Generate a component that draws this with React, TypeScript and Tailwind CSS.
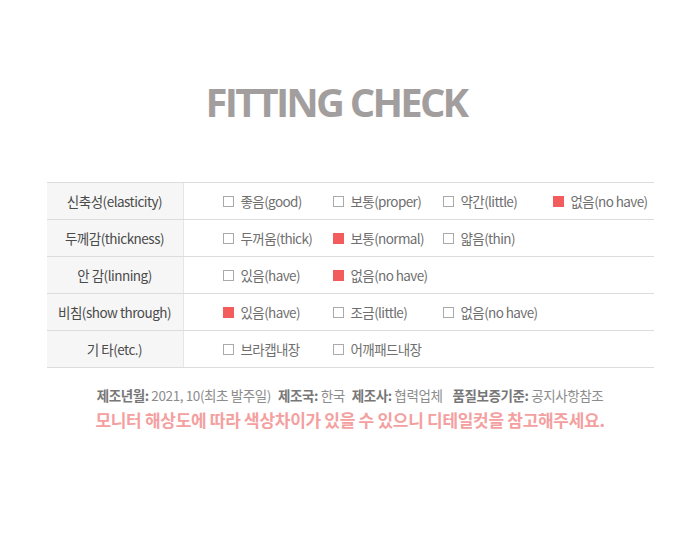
const rows: { label: string; items: { text: string; on?: boolean }[] }[] = [
  {
    label: '신축성(elasticity)',
    items: [
      { text: '좋음(good)' },
      { text: '보통(proper)' },
      { text: '약간(little)' },
      { text: '없음(no have)', on: true },
    ],
  },
  {
    label: '두께감(thickness)',
    items: [{ text: '두꺼움(thick)' }, { text: '보통(normal)', on: true }, { text: '얇음(thin)' }],
  },
  {
    label: '안 감(linning)',
    items: [{ text: '있음(have)' }, { text: '없음(no have)', on: true }],
  },
  {
    label: '비침(show through)',
    items: [{ text: '있음(have)', on: true }, { text: '조금(little)' }, { text: '없음(no have)' }],
  },
  {
    label: '기 타(etc.)',
    items: [{ text: '브라캡내장' }, { text: '어깨패드내장' }],
  },
];

const Box = ({ on }: { on?: boolean }) =>
  on ? (
    <span className="inline-block size-[11px] bg-[#f25c5c] mr-[7px] shrink-0" />
  ) : (
    <span className="inline-block size-[11px] border border-[#aaa] bg-white mr-[7px] shrink-0" />
  );

export default function App() {
  return (
    <div
      className="w-[700px] h-[546px] bg-white flex flex-col items-center"
      style={{ fontFamily: '"Noto Sans CJK KR", "Noto Sans", sans-serif' }}
    >
      <h1
        className="mt-[76px] mr-[28px] text-[40px] leading-[52px] font-bold text-[#a39e9e] tracking-[-2.8px]"
        style={{ fontFamily: '"Open Sans", "Noto Sans CJK KR", sans-serif' }}
      >
        FITTING CHECK
      </h1>

      <div className="mt-[54px] w-[607px] border-t border-[#dcdcdc]">
        {rows.map((r) => (
          <div key={r.label} className="flex h-[37px] border-b border-[#dcdcdc]">
            <div className="w-[137px] shrink-0 bg-[#f6f6f6] border-r border-[#e6e6e6] flex items-center justify-center text-[13.5px] text-[#4a4a4a] tracking-[-0.5px]">
              {r.label}
            </div>
            <div className="flex items-center pl-[39px]">
              {r.items.map((it) => (
                <div key={it.text} className="w-[110px] flex items-center text-[13.5px] text-[#6f6f6f] tracking-[-0.6px]">
                  <Box on={it.on} />
                  {it.text}
                </div>
              ))}
            </div>
          </div>
        ))}
      </div>

      <div className="mt-[17px] text-[13.5px] text-[#8c8c8c] tracking-[-0.4px] flex gap-[7px]">
        <span>
          <b className="text-[#777]">제조년월:</b> 2021, 10(최초 발주일)
        </span>
        <span>
          <b className="text-[#777]">제조국:</b> 한국
        </span>
        <span>
          <b className="text-[#777]">제조사:</b> 협력업체
        </span>
        <span className="ml-[3px]">
          <b className="text-[#777]">품질보증기준:</b> 공지사항참조
        </span>
      </div>
      <div className="mt-[2px] text-[17px] font-bold text-[#f4a0a0] tracking-[-0.3px]">
        모니터 해상도에 따라 색상차이가 있을 수 있으니 디테일컷을 참고해주세요.
      </div>
    </div>
  );
}
